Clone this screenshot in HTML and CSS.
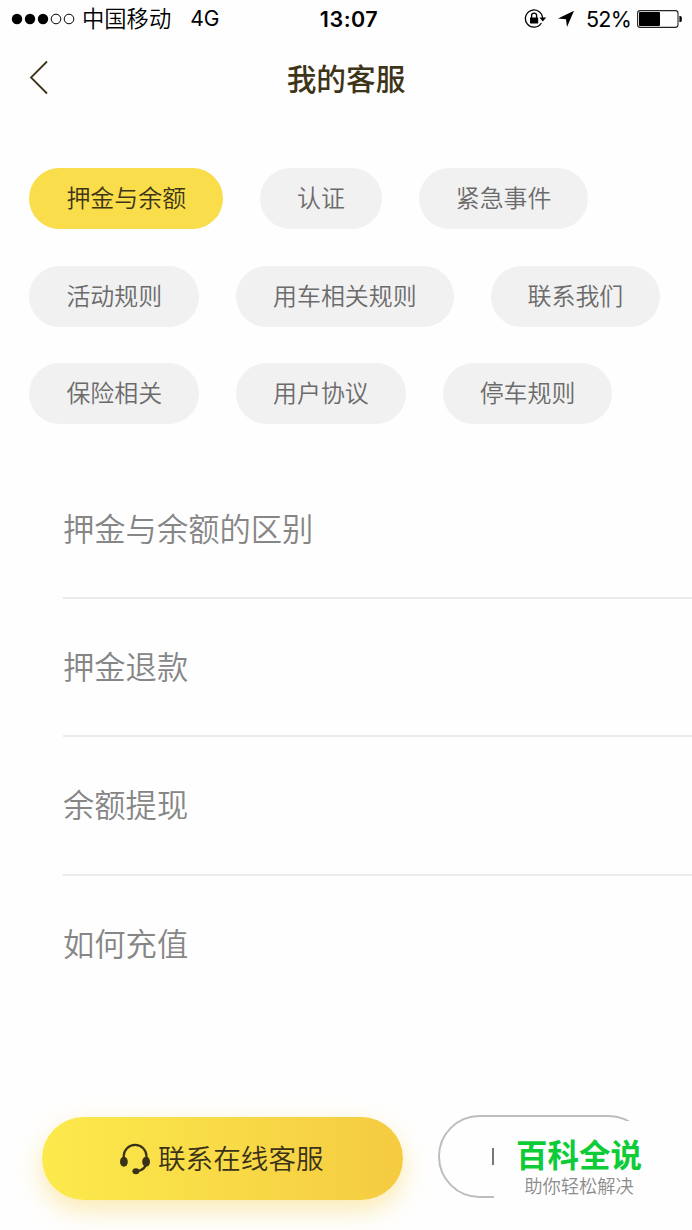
FILE: index.html
```html
<!DOCTYPE html>
<html lang="zh-CN">
<head>
<meta charset="utf-8">
<title>我的客服</title>
<link rel="stylesheet" href="styles.css">
</head>
<body>
<div class="screen">
  <div class="status">
    <div class="status-left">
      <svg class="signal" width="64" height="12" viewBox="0 0 64 12">
        <g fill="#000"><circle cx="6" cy="6" r="5.2"/><circle cx="19" cy="6" r="5.2"/><circle cx="32" cy="6" r="5.2"/></g>
        <g fill="none" stroke="#000" stroke-width="1"><circle cx="45" cy="6" r="4.8"/><circle cx="58" cy="6" r="4.8"/></g>
      </svg>
      <span class="carrier">中国移动</span>
      <span class="network">4G</span>
    </div>
    <div class="time">13:07</div>
    <div class="status-right">
      <svg width="24" height="22" viewBox="0 0 24 22">
        <path d="M17.400 15A8.600 8.600 0 1 1 18.600 10.500" fill="none" stroke="#000" stroke-width="1.300"/>
        <path d="M15.400 9.400h6.800l-3.400 4z" fill="#000"/>
        <rect x="6" y="9.400" width="8.200" height="6" rx=".6" fill="#000"/>
        <path d="M7.600 10V7.600a2.500 2.500 0 0 1 5 0V10" fill="none" stroke="#000" stroke-width="1.400"/>
      </svg>
      <svg class="locate" width="18" height="18" viewBox="0 0 18 18"><path d="M17 .8 10 17 9 9.200 1 8.400z" fill="#000"/></svg>
      <span class="percent">52%</span>
      <svg class="battery" width="45" height="18" viewBox="0 0 45 18">
        <rect x=".6" y=".6" width="40.400" height="16.800" rx="2.600" fill="none" stroke="#222" stroke-width="1.100"/>
        <rect x="2" y="2" width="21" height="14" rx="1" fill="#000"/>
        <path d="M42.400 6h.8a1.600 1.600 0 0 1 1.600 1.600v2.800a1.600 1.600 0 0 1-1.600 1.600h-.8z" fill="#000"/>
      </svg>
    </div>
  </div>

  <header class="nav">
    <svg class="back" width="20" height="36" viewBox="0 0 20 36"><path d="M18 1.500 2 17.500 18 33.500" fill="none" stroke="#3e3518" stroke-width="1.800"/></svg>
    <h1 class="title">我的客服</h1>
  </header>

  <div class="chips">
    <div class="chip-row"><span class="chip active">押金与余额</span><span class="chip">认证</span><span class="chip">紧急事件</span></div>
    <div class="chip-row"><span class="chip">活动规则</span><span class="chip">用车相关规则</span><span class="chip">联系我们</span></div>
    <div class="chip-row"><span class="chip">保险相关</span><span class="chip">用户协议</span><span class="chip">停车规则</span></div>
  </div>

  <ul class="list">
    <li class="item">押金与余额的区别</li>
    <li class="item">押金退款</li>
    <li class="item">余额提现</li>
    <li class="item">如何充值</li>
  </ul>

  <footer class="actions">
    <div class="btn primary">
      <svg class="headset" width="32" height="32" viewBox="0 0 32 32">
        <path d="M4.700 16V13.300A11.400 11.400 0 0 1 27.500 13.300V18C27.500 24 24 27.500 17 28.200" fill="none" stroke="#3a3218" stroke-width="2.200"/>
        <ellipse cx="4.900" cy="18.800" rx="3.900" ry="5" fill="#3a3218"/>
        <ellipse cx="27.100" cy="18.800" rx="3.900" ry="5" fill="#3a3218"/>
        <ellipse cx="16.900" cy="28.200" rx="3.500" ry="3" fill="#3a3218"/>
      </svg>
      <span>联系在线客服</span>
    </div>
    <div class="btn secondary">
      <span class="stroke"></span>
      <div class="badge">
        <strong class="badge-name">百科全说</strong>
        <span class="badge-sub">助你轻松解决</span>
      </div>
    </div>
  </footer>
</div>
</body>
</html>
```
FILE: styles.css
```css
* { box-sizing: border-box; }
body { margin: 0; background: #fefefe; font-family: Inter, "Noto Sans CJK SC", sans-serif; }
.screen { width: 692px; height: 1230px; overflow: hidden; display: flex; flex-direction: column; background: #fefefe; }

.status { height: 38px; flex: none; display: grid; grid-template-columns: 300px 98px 1fr; align-items: center; color: #000; font-size: 22px; line-height: 38px; }
.status-left { display: flex; align-items: center; padding-left: 11px; }
.carrier { margin-left: 7px; font-size: 22.300px; font-weight: 350; }
.network { margin-left: 19px; font-size: 21px; }
.time { text-align: center; font-weight: 600; font-size: 21.500px; letter-spacing: .5px; }
.status-right { display: flex; align-items: center; justify-content: flex-end; padding-right: 10px; }
.locate { margin-left: 9px; }
.percent { margin: 0 6px 0 11px; font-size: 21.500px; letter-spacing: -.8px; }

.nav { height: 80px; flex: none; display: grid; grid-template-columns: 120px 1fr 120px; align-items: center; }
.back { margin-left: 29px; }
.title { margin: 0; padding-top: 2px; text-align: center; font-size: 29.700px; line-height: 44px; font-weight: 500; color: #3e3518; }

.chips { margin-top: 50px; padding-left: 29.400px; display: flex; flex-direction: column; gap: 36.700px; flex: none; }
.chip-row { display: flex; gap: 36.900px; }
.chip { height: 61px; padding: 0 37px; border-radius: 31px; background: #f1f1f1; color: #6b6b6b; font-size: 23.950px; font-weight: 350; line-height: 62px; white-space: nowrap; }
.chip.active { background: #f9dd4a; color: #3e3518; }

.list { list-style: none; margin: 36.300px 0 0; padding: 0 0 0 63px; flex: none; }
.item { height: 138.400px; line-height: 139px; font-size: 31.300px; font-weight: 350; color: #868686; border-bottom: 2px solid #ebebeb; }
.item:last-child { border-bottom: 0; }

.actions { margin-top: auto; padding: 0 0 30px 42px; display: flex; gap: 35.500px; align-items: flex-end; flex: none; }
.btn { border-radius: 42px; display: flex; align-items: center; }
.primary { width: 360.500px; height: 83px; padding-left: 77px; background: linear-gradient(90deg, #fcea4c, #f5cb41); box-shadow: 0 10px 26px rgba(248, 208, 70, .42); color: #3a3218; font-size: 27.600px; font-weight: 350; line-height: 40px; }
.headset { margin-right: 7px; }
.secondary { position: relative; width: 212px; height: 83px; margin-bottom: 2px; border: 2px solid #bdbdbd; padding-left: 52px; }
.stroke { width: 2px; height: 17px; background: #777; }
.badge { position: absolute; left: 54px; top: 4px; width: 170px; height: 84px; background: #fefefe; display: flex; flex-direction: column; align-items: center; padding-top: 15px; }
.badge-name { font-size: 31.500px; line-height: 40px; font-weight: 700; color: #0dcc37; }
.badge-sub { font-size: 18.300px; line-height: 20px; color: #8c8c8c; font-weight: 350; }
```
